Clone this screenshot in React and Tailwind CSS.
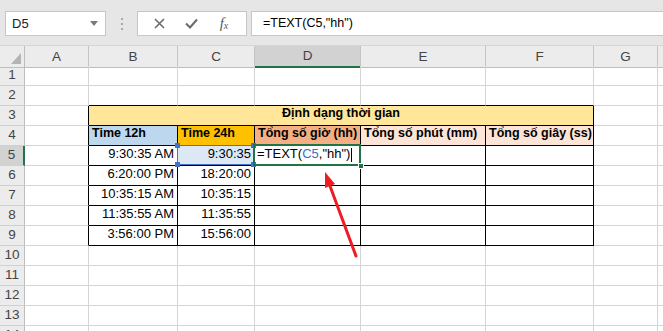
import React from 'react';

const cols = ['A', 'B', 'C', 'D', 'E', 'F', 'G', 'H'];
const gridCols = 'grid grid-cols-[25px_64px_89px_77px_106px_125px_108px_64px_64px]';

const rowsData = {
  5: ['9:30:35 AM', '9:30:35'],
  6: ['6:20:00 PM', '18:20:00'],
  7: ['10:35:15 AM', '10:35:15'],
  8: ['11:35:55 AM', '11:35:55'],
  9: ['3:56:00 PM', '15:56:00'],
};

const headerBg = {
  2: 'bg-[#bdd7ee]',
  3: 'bg-[#ffc000]',
  4: 'bg-[#f4b084]',
  5: 'bg-[#fce4d6]',
  6: 'bg-[#fce4d6]',
};
const headerText = {
  2: 'Time 12h',
  3: 'Time 24h',
  4: 'Tổng số giờ (hh)',
  5: 'Tổng số phút (mm)',
  6: 'Tổng số giây (ss)',
};

function borderCls(r, c) {
  const right = r >= 3 && r <= 9 && c >= 1 && c <= 6 ? 'border-r-black' : 'border-r-[#d4d4d4]';
  const bottom = r >= 2 && r <= 9 && c >= 2 && c <= 6 ? 'border-b-black' : 'border-b-[#d4d4d4]';
  return `border-r border-b ${right} ${bottom}`;
}

const RowHeader = ({ n }) => (
  <div
    className={`flex items-center justify-center text-[13.5px] text-[#444] border-b border-b-[#d0d0d0] ${
      n === 5 ? 'bg-[#d2d2d2] border-r-2 border-r-[#217346]' : 'bg-[#ececec] border-r border-r-[#bdbdbd]'
    }`}
  >
    {n}
  </div>
);

const Cell = ({ r, c }) => {
  const base = borderCls(r, c);
  if (r === 4 && headerText[c]) {
    return (
      <div className={`${base} ${headerBg[c]} flex items-end pb-[2px] pl-[3px] font-bold text-[12.5px] text-black whitespace-nowrap overflow-hidden`}>
        {headerText[c]}
      </div>
    );
  }
  if (rowsData[r] && (c === 2 || c === 3)) {
    const val = rowsData[r][c - 2];
    if (r === 5 && c === 3) {
      return (
        <div className={`${base} bg-[#dde8f5] relative flex items-end justify-end pb-[2px] pr-[3px] text-[13px] text-black`}>
          {val}
          <div className="absolute -left-[1px] -top-[1px] right-0 bottom-0 border border-[#4472c4]" />
          <div className="absolute -left-[3px] -top-[3px] w-[5px] h-[5px] bg-[#4472c4]" />
          <div className="absolute -right-[2px] -top-[3px] w-[5px] h-[5px] bg-[#4472c4]" />
          <div className="absolute -left-[3px] -bottom-[2px] w-[5px] h-[5px] bg-[#4472c4]" />
          <div className="absolute -right-[2px] -bottom-[2px] w-[5px] h-[5px] bg-[#4472c4]" />
        </div>
      );
    }
    return (
      <div className={`${base} flex items-end justify-end pb-[2px] pr-[3px] text-[13px] text-black`}>{val}</div>
    );
  }
  if (r === 5 && c === 4) {
    return (
      <div className={`${base} relative flex items-end pb-[2px] pl-[2px] text-[13px] text-black whitespace-nowrap`}>
        <span>
          =TEXT(<span className="text-[#3a6fc0]">C5</span>,"hh")
        </span>
        <span className="ml-[1px] w-[1px] h-[14px] bg-black mb-[1px]" />
        <div className="absolute -left-[2px] -top-[2px] -right-[1px] -bottom-[1px] border-2 border-[#217346]" />
        <div className="absolute -right-[4px] -bottom-[4px] w-[6px] h-[6px] bg-[#217346] border border-white" />
      </div>
    );
  }
  return <div className={base} />;
};

const App = () => {
  const rows = Array.from({ length: 14 }, (_, i) => i + 1);
  return (
    <div className="relative w-[663px] h-[331px] overflow-hidden bg-white font-['Liberation_Sans',Arial,sans-serif]">
      {/* formula bar */}
      <div className="h-[46px] bg-[#e6e6e6] flex items-start pt-[11px] border-b border-b-[#d6d6d6]">
        <div className="ml-[5px] w-[101px] h-[25px] bg-white border border-[#c6c6c6] flex items-center justify-between pl-[6px] pr-[7px] text-[13px] text-[#222]">
          <span>D5</span>
          <svg width="8" height="5" viewBox="0 0 8 5">
            <path d="M0 0 L8 0 L4 5 Z" fill="#7a7a7a" />
          </svg>
        </div>
        <div className="w-[31px] h-[25px] flex flex-col items-center justify-center gap-[3px]">
          <span className="w-[2px] h-[2px] bg-[#a8a8a8]" />
          <span className="w-[2px] h-[2px] bg-[#a8a8a8]" />
          <span className="w-[2px] h-[2px] bg-[#a8a8a8]" />
        </div>
        <div className="w-[110px] h-[25px] bg-white border border-[#c6c6c6] flex items-center">
          <div className="w-[42px] flex justify-center">
            <svg width="11" height="11" viewBox="0 0 11 11">
              <path d="M1 1 L10 10 M10 1 L1 10" stroke="#6a6a6a" strokeWidth="1.6" />
            </svg>
          </div>
          <div className="w-[22px] flex justify-center">
            <svg width="13" height="11" viewBox="0 0 13 11">
              <path d="M1 5.5 L5 9.5 L12 1.5" stroke="#6a6a6a" strokeWidth="2" fill="none" />
            </svg>
          </div>
          <div className="flex-1 flex justify-center items-end font-['Liberation_Serif',serif] italic text-[#5a5a5a]">
            <span className="text-[15px] leading-none">f</span>
            <span className="text-[10px] leading-none">x</span>
          </div>
        </div>
        <div className="ml-[4px] flex-1 h-[25px] bg-white border border-r-0 border-[#c6c6c6] flex items-center pl-[11px] text-[12.5px] text-black">
          =TEXT(C5,"hh")
        </div>
      </div>

      {/* column headers */}
      <div className={`${gridCols} h-[20px]`}>
        <div className="relative bg-[#ececec] border-r border-b border-[#bdbdbd]">
          <svg className="absolute right-[3px] bottom-[3px]" width="10" height="11" viewBox="0 0 10 11">
            <path d="M10 0 L10 11 L0 11 Z" fill="#b4b4b4" />
          </svg>
        </div>
        {cols.map((c) => (
          <div
            key={c}
            className={`flex items-center justify-center text-[13.5px] text-[#444] border-r border-r-[#c4c4c4] ${
              c === 'D' ? 'bg-[#d2d2d2] border-b-2 border-b-[#217346]' : 'bg-[#ececec] border-b border-b-[#bdbdbd]'
            }`}
          >
            {c}
          </div>
        ))}
      </div>

      {/* grid */}
      <div className={`${gridCols} auto-rows-[20px]`}>
        {rows.map((r) => {
          if (r === 3) {
            return (
              <React.Fragment key={r}>
                <RowHeader n={r} />
                <div className={borderCls(3, 1)} />
                <div className="col-span-5 bg-[#ffe699] border-r border-b border-r-black border-b-black flex items-end justify-center pb-[2px] font-bold text-[12.5px] text-black">
                  Định dạng thời gian
                </div>
                <div className={borderCls(3, 7)} />
                <div className={borderCls(3, 8)} />
              </React.Fragment>
            );
          }
          return (
            <React.Fragment key={r}>
              <RowHeader n={r} />
              {cols.map((_, i) => (
                <Cell key={i} r={r} c={i + 1} />
              ))}
            </React.Fragment>
          );
        })}
      </div>

      {/* red arrow */}
      <svg className="absolute inset-0 pointer-events-none" width="663" height="331" viewBox="0 0 663 331">
        <line x1="356" y1="256" x2="330" y2="186" stroke="#ee1c24" strokeWidth="3" strokeLinecap="round" />
        <polygon points="325,172 335,184 325,188" fill="#ee1c24" />
      </svg>
    </div>
  );
};

export default App;
